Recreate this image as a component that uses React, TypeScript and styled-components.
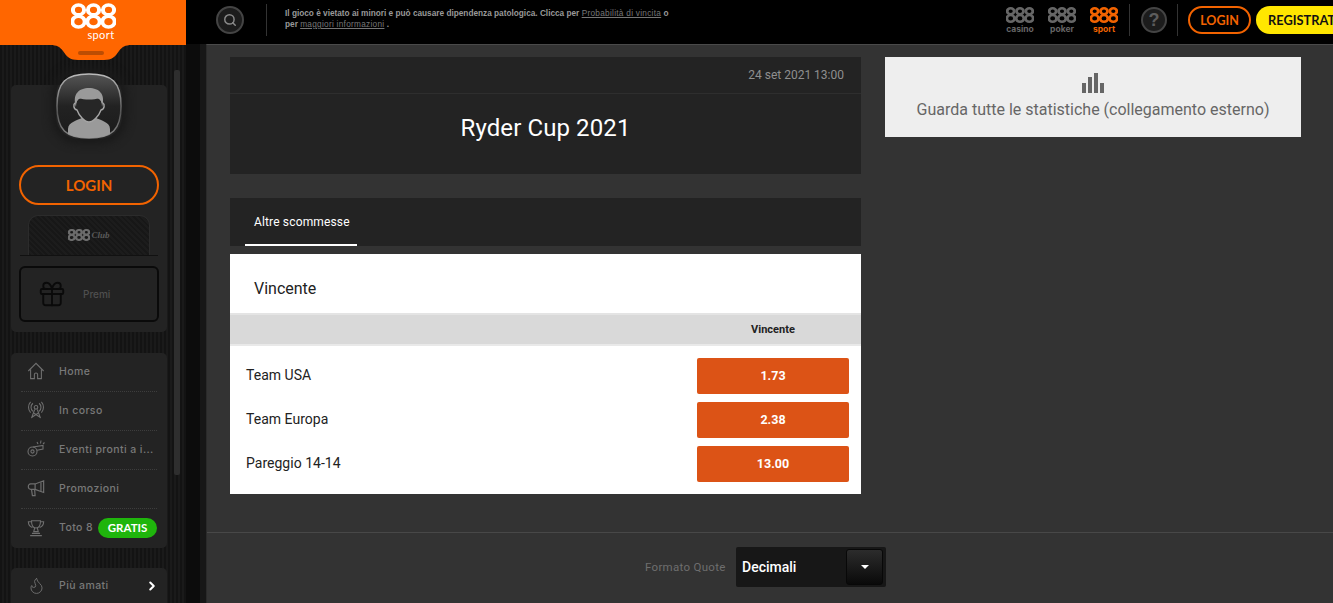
import React from 'react';
import styled, { createGlobalStyle } from 'styled-components';
import { ChevronRight, Flame, Gift, Search } from 'lucide-react';

const GlobalStyle = createGlobalStyle`
  html, body {
    margin: 0;
    padding: 0;
    height: 100%;
    background: #333;
    overflow: hidden;
  }
  * {
    box-sizing: border-box;
  }
`;

const Page = styled.div`
  display: grid;
  grid-template-columns: 186px 20px 1fr;
  grid-template-rows: 44px 1fr;
  width: 1333px;
  height: 603px;
  overflow: hidden;
  font-family: Roboto, 'Liberation Sans', sans-serif;
`;

const TopBar = styled.header`
  grid-column: 2 / 4;
  grid-row: 1;
  display: flex;
  align-items: center;
  background: #000;
  height: 44px;
  padding: 0 0 4px 30px;
`;

const RoundIcon = styled.div<{ $size: number }>`
  width: ${(p) => p.$size}px;
  height: ${(p) => p.$size}px;
  flex: none;
  display: flex;
  align-items: center;
  justify-content: center;
  border: 2px solid #444;
  border-radius: 50%;
  background: #1c1c1c;
  color: #8a8a8a;
`;

const QuestionMark = styled.span`
  font: 700 18px 'Liberation Sans', sans-serif;
  color: #5c5c5c;
`;

const Divider = styled.div<{ $gap: number }>`
  width: 1px;
  height: 32px;
  flex: none;
  background: #333;
  margin: 0 ${(p) => p.$gap}px;
`;

const Notice = styled.p`
  width: 392px;
  margin: -2px 0 0 -4px;
  font: 700 8.26px/11.5px 'Liberation Sans', sans-serif;
  color: #999;
  a {
    color: #777;
    font-weight: 400;
    letter-spacing: 0.28px;
    text-decoration: underline;
  }
`;

const BrandGroup = styled.div`
  display: flex;
  gap: 14px;
  margin-left: auto;
`;

const Brand = styled.div<{ $active?: boolean }>`
  width: 28px;
  display: flex;
  flex-direction: column;
  align-items: center;
  color: ${(p) => (p.$active ? '#f26300' : '#666')};
  svg {
    display: block;
  }
  span {
    font: 700 8.5px/9px Inter, 'Liberation Sans', sans-serif;
    margin-top: 2px;
  }
`;

const TopLogin = styled.button`
  width: 63px;
  height: 28px;
  padding: 0;
  flex: none;
  border: 2px solid #f26300;
  border-radius: 14px;
  background: #000;
  color: #f26300;
  font: 700 12.5px Lato, 'Liberation Sans', sans-serif;
`;

const TopRegister = styled.button`
  width: 100px;
  height: 28px;
  padding: 0 0 0 12px;
  margin: 0 -23px 0 5px;
  flex: none;
  border: 0;
  border-radius: 14px;
  background: #ffe600;
  color: #111;
  font: 700 12.8px Lato, 'Liberation Sans', sans-serif;
  text-align: left;
  white-space: nowrap;
`;

const Sidebar = styled.aside`
  position: relative;
  grid-column: 1;
  grid-row: 1 / 3;
  height: 603px;
  overflow: hidden;
  background: repeating-linear-gradient(90deg, #131313 0 2px, #1a1a1a 2px 4px);
`;

const LogoBar = styled.div`
  height: 45px;
  display: flex;
  justify-content: center;
  background: #ff6600;
  padding-top: 3px;
`;

const LogoStack = styled.div`
  display: flex;
  flex-direction: column;
  align-items: flex-end;
  color: #fff;
  svg {
    display: block;
  }
  span {
    font: 400 11px/11px Lato, 'Liberation Sans', sans-serif;
    letter-spacing: 0.4px;
    margin: 0 1px 0 0;
  }
`;

const Notch = styled.div`
  position: absolute;
  top: 45px;
  left: 50px;
  width: 82px;
  height: 15px;
  svg {
    display: block;
  }
  i {
    position: absolute;
    top: 6px;
    left: 28px;
    width: 26px;
    height: 4px;
    border-radius: 2px;
    background: #bc4d03;
  }
`;

const ScrollThumb = styled.div`
  position: absolute;
  top: 70px;
  left: 174px;
  width: 6px;
  height: 405px;
  border-radius: 2px;
  background: #2e2e2e;
`;

const SideColumn = styled.div`
  width: 156px;
  margin-left: 11px;
  display: flex;
  flex-direction: column;
`;

const Panel = styled.section<{ $top: number }>`
  margin-top: ${(p) => p.$top}px;
  background: #232323;
  border-radius: 5px;
`;

const ProfilePanel = styled(Panel)`
  height: 247px;
  padding: 0 8px;
  display: flex;
  flex-direction: column;
`;

const AvatarWrap = styled.div`
  width: 66px;
  height: 66px;
  margin: -12px auto 0;
  flex: none;
  box-shadow: 0 0 8px 5px #1a1a1a;
  border-radius: 22px;
`;

const SideLogin = styled.button`
  height: 40px;
  margin-top: 26px;
  flex: none;
  border: 2px solid #f26300;
  border-radius: 20px;
  background: transparent;
  color: #f26300;
  font: 700 15px Lato, 'Liberation Sans', sans-serif;
`;

const ClubTab = styled.div`
  height: 41px;
  margin: 10px 1px 0;
  flex: none;
  display: flex;
  align-items: center;
  justify-content: center;
  padding: 0 8px;
  border-bottom: 1px solid #111;
  position: relative;
  color: #6c6c6c;
  em {
    font: italic 700 9px 'Liberation Serif', serif;
    color: #5a5a5a;
    margin-left: 1px;
  }
  &::before {
    content: '';
    position: absolute;
    inset: 0 8px 0 8px;
    border-radius: 10px 10px 0 0;
    border: 1px solid #2b2b2b;
    border-bottom: 0;
    background: repeating-linear-gradient(45deg, #171717 0 2px, #1c1c1c 2px 4px);
  }
  svg, em {
    position: relative;
  }
`;

const PrizeBox = styled.div`
  height: 56px;
  margin-top: 10px;
  flex: none;
  display: flex;
  align-items: center;
  padding-left: 16px;
  gap: 16px;
  border: 2px solid #0a0a0a;
  border-radius: 6px;
  color: #0a0a0a;
  span {
    font: 500 10px Inter, 'Liberation Sans', sans-serif;
    color: #4f4f4f;
  }
`;

const NavRow = styled.div<{ $last?: boolean; $tall?: boolean }>`
  height: 39px;
  margin: 0 10px;
  padding-bottom: ${(p) => (p.$tall ? '4px' : '2px')};
  display: flex;
  align-items: center;
  position: relative;
  color: #6f6f6f;
  border-bottom: ${(p) => (p.$last ? '0' : '1px dotted #3d3d3d')};
`;

const NavIcon = styled.span`
  width: 27px;
  margin-left: 6px;
  margin-right: 5px;
  flex: none;
  display: flex;
  color: #6f6f6f;
`;

const NavLabel = styled.span`
  flex: 1;
  font: 500 10.5px Inter, 'Liberation Sans', sans-serif;
  letter-spacing: 0.4px;
  color: #797979;
  white-space: nowrap;
`;

const FreeBadge = styled.span`
  width: 59px;
  height: 20px;
  flex: none;
  margin-left: -20px;
  display: flex;
  align-items: center;
  justify-content: center;
  border-radius: 10px;
  background: #1fb50c;
  color: #fff;
  font: 700 11.5px Lato, 'Liberation Sans', sans-serif;
`;

const MoreArrow = styled.span`
  display: flex;
  margin-right: -2px;
  margin-left: -4px;
  color: #fff;
`;

const Shell = styled.main`
  grid-column: 3;
  grid-row: 2;
  display: flex;
  flex-direction: column;
  min-width: 0;
  background: #333;
  border-top: 1px solid #4a4a4a;
  border-left: 1px solid #2a2a2a;
`;

const Gutter = styled.div`
  grid-column: 2;
  grid-row: 2;
  background: linear-gradient(90deg, #0c0c0c 0 14px, #171717 14px 20px);
`;

const Columns = styled.div`
  display: grid;
  grid-template-columns: 631px 416px;
  gap: 24px;
  align-items: start;
  padding: 12px 0 0 23px;
  height: 488px;
  border-bottom: 1px solid #484848;
`;

const EventColumn = styled.div`
  display: flex;
  flex-direction: column;
`;

const EventHeader = styled.section`
  height: 117px;
  background: #232323;
`;

const EventDate = styled.div`
  height: 37px;
  padding-right: 17px;
  display: flex;
  align-items: center;
  justify-content: flex-end;
  border-bottom: 1px solid #2e2e2e;
  font-size: 12px;
  color: #8f8f8f;
`;

const EventTitle = styled.h1`
  margin: 18px 0 0;
  text-align: center;
  font-size: 24px;
  line-height: 32px;
  font-weight: 400;
  letter-spacing: 0.1px;
  color: #fff;
`;

const TabBar = styled.nav`
  height: 48px;
  margin-top: 24px;
  padding-left: 15px;
  display: flex;
  background: #232323;
`;

const Tab = styled.div`
  width: 112px;
  height: 48px;
  padding: 2px 0 0 9px;
  display: flex;
  align-items: center;
  border-bottom: 2px solid #fff;
  font-size: 12px;
  font-weight: 400;
  letter-spacing: 0.15px;
  color: #fff;
`;

const Market = styled.section`
  margin-top: 8px;
  background: #fff;
  padding-bottom: 12px;
`;

const MarketTitle = styled.h2`
  height: 59px;
  margin: 0;
  padding: 10px 0 0 24px;
  display: flex;
  align-items: center;
  font-size: 16px;
  font-weight: 400;
  color: #222;
`;

const MarketHead = styled.div`
  height: 33px;
  padding-right: 12px;
  display: flex;
  align-items: center;
  justify-content: flex-end;
  background: #d9d9d9;
  border-top: 2px solid #e4e4e4;
  border-bottom: 2px solid #e9e9e9;
  span {
    width: 152px;
    text-align: center;
    font: 700 11px Roboto, sans-serif;
    color: #222;
  }
`;

const OutcomeList = styled.div`
  padding: 12px 12px 0 16px;
  display: flex;
  flex-direction: column;
  gap: 8px;
`;

const Outcome = styled.div`
  display: flex;
  align-items: center;
  justify-content: space-between;
  font-size: 14px;
  color: #222;
`;

const OutcomeName = styled.span`
  margin-top: -2px;
  letter-spacing: 0.02px;
`;

const OddsButton = styled.button`
  width: 152px;
  height: 36px;
  padding: 0 0 2px;
  border: 0;
  border-radius: 2px;
  background: #dc5316;
  color: #fff;
  font: 700 12.5px Roboto, sans-serif;
`;

const StatsCard = styled.section`
  height: 80px;
  display: flex;
  flex-direction: column;
  align-items: center;
  padding-top: 16px;
  gap: 7px;
  background: #eee;
  font-size: 16px;
  line-height: 20px;
  color: #666;
`;

const Bars = styled.div`
  display: flex;
  align-items: flex-end;
  gap: 2px;
  height: 20px;
`;

const Bar = styled.i<{ $height: number }>`
  display: block;
  width: 4px;
  height: ${(p) => p.$height}px;
  background: #666;
`;

const Footer = styled.footer`
  height: 70px;
  padding: 14px 0 0 438px;
  display: flex;
  align-items: flex-start;
`;

const FormatLabel = styled.span`
  width: 91px;
  line-height: 40px;
  font-size: 11.5px;
  letter-spacing: 0.3px;
  color: #6e6e6e;
  white-space: nowrap;
`;

const OddsSelect = styled.div`
  width: 150px;
  height: 40px;
  padding: 2px 3px 2px 6px;
  display: flex;
  align-items: center;
  justify-content: space-between;
  background: #171717;
  border-radius: 2px;
  font-size: 14px;
  font-weight: 500;
  color: #fff;
`;

const SelectArrow = styled.div`
  width: 37px;
  height: 36px;
  display: flex;
  align-items: center;
  justify-content: center;
  border-radius: 3px;
  border: 1px solid #080808;
  background: linear-gradient(#2c2c2c, #0a0a0a);
  &::after {
    content: '';
    border-style: solid;
    border-width: 4px 4px 0;
    border-color: #fff transparent transparent;
  }
`;

/* the 888 mark: three stacked-ring digits */
const Mark888: React.FC<{ width: number; height: number; ring?: number }> = ({ width, height, ring = 3 }) => (
  <svg
    width={width}
    height={height}
    viewBox="0 0 45 30"
    preserveAspectRatio="none"
    fill="none"
    stroke="currentColor"
    strokeWidth={ring}
  >
    {[7.5, 22.5, 37.5].map((x) => (
      <g key={x}>
        <circle cx={x} cy={8} r={5.6} />
        <circle cx={x} cy={21.5} r={6.2} />
      </g>
    ))}
  </svg>
);

const Avatar: React.FC = () => (
  <svg width="66" height="66" viewBox="0 0 66 66">
    <defs>
      <linearGradient id="avatarBg" x1="0" y1="0" x2="0" y2="1">
        <stop offset="0" stopColor="#555" />
        <stop offset="0.5" stopColor="#222" />
        <stop offset="1" stopColor="#1b1b1b" />
      </linearGradient>
      <linearGradient id="avatarEdge" x1="0" y1="0" x2="0" y2="1">
        <stop offset="0" stopColor="#bbb" />
        <stop offset="0.6" stopColor="#555" />
        <stop offset="1" stopColor="#888" />
      </linearGradient>
      <clipPath id="avatarClip">
        <path d="M33 1C56 1 65 9 65 33S56 65 33 65 1 57 1 33 10 1 33 1Z" />
      </clipPath>
    </defs>
    <path d="M33 1C56 1 65 9 65 33S56 65 33 65 1 57 1 33 10 1 33 1Z" fill="url(#avatarBg)" stroke="url(#avatarEdge)" strokeWidth="1.5" />
    <g clipPath="url(#avatarClip)">
      <path d="M12 66V56c0-7 10-9 14-11 4 4 10 4 14 0 4 2 14 4 14 11v10Z" fill="#9a9a9a" />
      <path d="M20 29c-3 2-3 7 1 8 2 6 8 12 12 12s10-6 12-12c4-1 4-6 1-8-1-8-25-8-26 0Z" fill="#262626" stroke="#a5a5a5" strokeWidth="1.4" />
      <path d="M20 34c-4-13 3-19 13-19s17 6 13 19c0-4-1-7-3-9-5 2-15 2-20 0-2 2-3 5-3 9Z" fill="#9a9a9a" />
    </g>
  </svg>
);

const NotchShape: React.FC = () => (
  <svg width="82" height="15" viewBox="0 0 82 15" fill="#ff6600">
    <path d="M0 0H82C75 0 72 2 69 6 65 12 62 15 54 15H28C20 15 17 12 13 6 10 2 7 0 0 0Z" />
  </svg>
);

const HomeIcon: React.FC = () => (
  <svg width="18" height="18" viewBox="0 0 20 20" fill="none" stroke="currentColor" strokeWidth="1.2">
    <path d="M1.5 10L10 1.5 18.5 10" />
    <path d="M4 8v10.5h4.2V14a1.8 1.8 0 0 1 3.6 0v4.5H16V8" />
  </svg>
);

const TowerIcon: React.FC = () => (
  <svg width="18" height="18" viewBox="0 0 20 20" fill="none" stroke="currentColor" strokeWidth="1.2">
    <circle cx="10" cy="7" r="2" />
    <path d="M6.5 2.5a6 6 0 0 0 0 9M13.5 2.5a6 6 0 0 1 0 9" />
    <path d="M4 1a9 9 0 0 0 0 12M16 1a9 9 0 0 1 0 12" />
    <path d="M8.5 9.5L5 19M11.5 9.5L15 19M5.5 18L13 13M14.5 18L7 13" />
  </svg>
);

const WhistleIcon: React.FC = () => (
  <svg width="18" height="18" viewBox="0 0 18 18" fill="none" stroke="currentColor" strokeWidth="1.1">
    <circle cx="5.5" cy="11.5" r="4.5" />
    <circle cx="5.5" cy="11.5" r="1.6" />
    <path d="M6 7l10-1.5V9l-6 1.2" />
    <path d="M11 4l-1-2M13.5 3.5l.5-3M16 4l1.5-1.5" />
  </svg>
);

const MegaphoneIcon: React.FC = () => (
  <svg width="18" height="18" viewBox="0 0 20 20" fill="none" stroke="currentColor" strokeWidth="1.3">
    <path d="M18.5 2v13L9 11.5H4A2.5 2.5 0 0 1 1.500 9V8A2.500 2.500 0 0 1 4 5.500h5Z" />
    <path d="M9 5.500v6M15.500 3.500v10" />
    <path d="M5 11.500l1 7h3l-.5-7" />
  </svg>
);

const TrophyIcon: React.FC = () => (
  <svg width="18" height="18" viewBox="0 0 20 20" fill="none" stroke="currentColor" strokeWidth="1.2">
    <path d="M5 2h10c0 5-2 8-5 8S5 7 5 2Z" />
    <path d="M5 3H1.500c0 4 2 5.500 4.500 6.500M15 3h3.500c0 4-2 5.500-4.500 6.500" />
    <path d="M8.500 10l-1 4h5l-1-4" />
    <path d="M5.500 16h9M3.500 18.500h13" />
  </svg>
);

const navItems = [
  { label: 'Home', icon: <HomeIcon /> },
  { label: 'In corso', icon: <TowerIcon /> },
  { label: 'Eventi pronti a i...', icon: <WhistleIcon /> },
  { label: 'Promozioni', icon: <MegaphoneIcon /> },
];

const outcomes = [
  { name: 'Team USA', odds: '1.73' },
  { name: 'Team Europa', odds: '2.38' },
  { name: 'Pareggio 14-14', odds: '13.00' },
];

const App: React.FC = () => (
  <>
    <GlobalStyle />
    <Page>
      <Sidebar>
        <LogoBar>
          <LogoStack>
            <Mark888 width={45} height={26} ring={4} />
            <span>sport</span>
          </LogoStack>
        </LogoBar>
        <Notch>
          <NotchShape />
          <i />
        </Notch>
        <ScrollThumb />
        <SideColumn>
          <ProfilePanel $top={40}>
            <AvatarWrap>
              <Avatar />
            </AvatarWrap>
            <SideLogin>LOGIN</SideLogin>
            <ClubTab>
              <Mark888 width={22} height={12} ring={5} />
              <em>Club</em>
            </ClubTab>
            <PrizeBox>
              <Gift size={30} strokeWidth={1.5} />
              <span>Premi</span>
            </PrizeBox>
          </ProfilePanel>
          <Panel $top={21}>
            {navItems.map((item) => (
              <NavRow key={item.label}>
                <NavIcon>{item.icon}</NavIcon>
                <NavLabel>{item.label}</NavLabel>
              </NavRow>
            ))}
            <NavRow $last>
              <NavIcon>
                <TrophyIcon />
              </NavIcon>
              <NavLabel>Toto 8</NavLabel>
              <FreeBadge>GRATIS</FreeBadge>
            </NavRow>
          </Panel>
          <Panel $top={20}>
            <NavRow $last $tall>
              <NavIcon>
                <Flame size={19} strokeWidth={1.2} />
              </NavIcon>
              <NavLabel>Più amati</NavLabel>
              <MoreArrow>
                <ChevronRight size={14} strokeWidth={3.5} />
              </MoreArrow>
            </NavRow>
          </Panel>
        </SideColumn>
      </Sidebar>

      <TopBar>
        <RoundIcon $size={28}>
          <Search size={14} strokeWidth={2.5} />
        </RoundIcon>
        <Divider $gap={22} />
        <Notice>
          Il gioco è vietato ai minori e può causare dipendenza patologica. Clicca per{' '}
          <a>Probabilità di vincita</a> o per <a>maggiori informazioni</a> .
        </Notice>
        <BrandGroup>
          <Brand>
            <Mark888 width={28} height={16} ring={4.5} />
            <span>casino</span>
          </Brand>
          <Brand>
            <Mark888 width={28} height={16} ring={4.5} />
            <span>poker</span>
          </Brand>
          <Brand $active>
            <Mark888 width={28} height={16} ring={4.5} />
            <span>sport</span>
          </Brand>
        </BrandGroup>
        <Divider $gap={11} />
        <RoundIcon $size={26}>
          <QuestionMark>?</QuestionMark>
        </RoundIcon>
        <Divider $gap={10} />
        <TopLogin>LOGIN</TopLogin>
        <TopRegister>REGISTRATI</TopRegister>
      </TopBar>

      <Gutter />

      <Shell>
        <Columns>
          <EventColumn>
            <EventHeader>
              <EventDate>24 set 2021 13:00</EventDate>
              <EventTitle>Ryder Cup 2021</EventTitle>
            </EventHeader>
            <TabBar>
              <Tab>Altre scommesse</Tab>
            </TabBar>
            <Market>
              <MarketTitle>Vincente</MarketTitle>
              <MarketHead>
                <span>Vincente</span>
              </MarketHead>
              <OutcomeList>
                {outcomes.map((o) => (
                  <Outcome key={o.name}>
                    <OutcomeName>{o.name}</OutcomeName>
                    <OddsButton>{o.odds}</OddsButton>
                  </Outcome>
                ))}
              </OutcomeList>
            </Market>
          </EventColumn>
          <StatsCard>
            <Bars>
              {[10, 16, 20, 10].map((h, i) => (
                <Bar key={i} $height={h} />
              ))}
            </Bars>
            Guarda tutte le statistiche (collegamento esterno)
          </StatsCard>
        </Columns>
        <Footer>
          <FormatLabel>Formato Quote</FormatLabel>
          <OddsSelect>
            Decimali
            <SelectArrow />
          </OddsSelect>
        </Footer>
      </Shell>
    </Page>
  </>
);

export default App;
